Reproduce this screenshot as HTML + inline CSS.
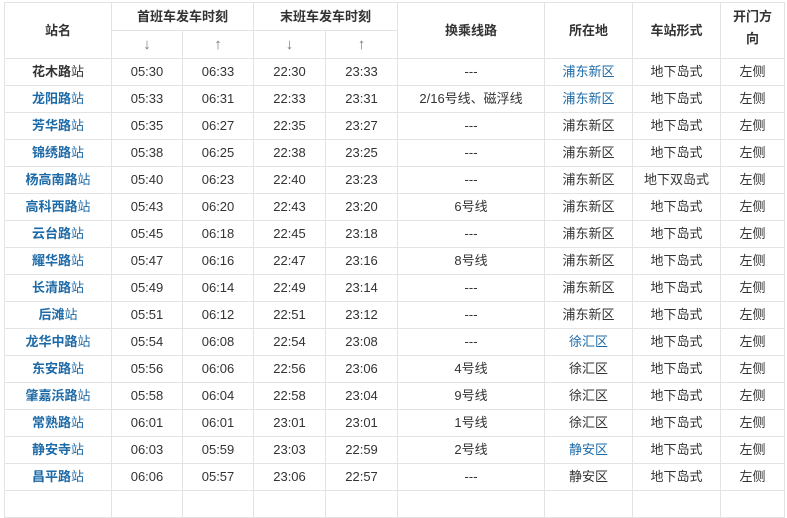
<!DOCTYPE html><html><head><meta charset="utf-8"><style>
body{margin:0;background:#fff;font-family:"Liberation Sans","Noto Sans CJK SC",sans-serif;}
table{position:absolute;left:4px;top:2px;border-collapse:collapse;table-layout:fixed;width:781px;font-size:13px;color:#333;}
td,th{border:1px solid #e3e3e3;text-align:center;padding:0;height:26px;line-height:16px;}
th{font-weight:bold;color:#333;}
tr.h1 th{height:27px}tr.h2 th{height:27px}
.arr{font-weight:normal;color:#777;font-size:15px;}
b{font-weight:bold}
.b{color:#1d6aa8}
</style></head><body>
<table>
<colgroup><col style="width:107px"><col style="width:71px"><col style="width:71px"><col style="width:72px"><col style="width:72px"><col style="width:147px"><col style="width:88px"><col style="width:88px"><col style="width:64px"></colgroup>
<tr class="h1"><th rowspan="2">站名</th><th colspan="2">首班车发车时刻</th><th colspan="2">末班车发车时刻</th><th rowspan="2">换乘线路</th><th rowspan="2">所在地</th><th rowspan="2">车站形式</th><th rowspan="2">开门方<br><span style="line-height:28px">向</span></th></tr>
<tr class="h2"><th class="arr">↓</th><th class="arr">↑</th><th class="arr">↓</th><th class="arr">↑</th></tr>
<tr><td><b>花木路</b>站</td><td>05:30</td><td>06:33</td><td>22:30</td><td>23:33</td><td>---</td><td class="b">浦东新区</td><td>地下岛式</td><td>左侧</td></tr>
<tr><td class="b"><b>龙阳路</b>站</td><td>05:33</td><td>06:31</td><td>22:33</td><td>23:31</td><td>2/16号线、磁浮线</td><td class="b">浦东新区</td><td>地下岛式</td><td>左侧</td></tr>
<tr><td class="b"><b>芳华路</b>站</td><td>05:35</td><td>06:27</td><td>22:35</td><td>23:27</td><td>---</td><td>浦东新区</td><td>地下岛式</td><td>左侧</td></tr>
<tr><td class="b"><b>锦绣路</b>站</td><td>05:38</td><td>06:25</td><td>22:38</td><td>23:25</td><td>---</td><td>浦东新区</td><td>地下岛式</td><td>左侧</td></tr>
<tr><td class="b"><b>杨高南路</b>站</td><td>05:40</td><td>06:23</td><td>22:40</td><td>23:23</td><td>---</td><td>浦东新区</td><td>地下双岛式</td><td>左侧</td></tr>
<tr><td class="b"><b>高科西路</b>站</td><td>05:43</td><td>06:20</td><td>22:43</td><td>23:20</td><td>6号线</td><td>浦东新区</td><td>地下岛式</td><td>左侧</td></tr>
<tr><td class="b"><b>云台路</b>站</td><td>05:45</td><td>06:18</td><td>22:45</td><td>23:18</td><td>---</td><td>浦东新区</td><td>地下岛式</td><td>左侧</td></tr>
<tr><td class="b"><b>耀华路</b>站</td><td>05:47</td><td>06:16</td><td>22:47</td><td>23:16</td><td>8号线</td><td>浦东新区</td><td>地下岛式</td><td>左侧</td></tr>
<tr><td class="b"><b>长清路</b>站</td><td>05:49</td><td>06:14</td><td>22:49</td><td>23:14</td><td>---</td><td>浦东新区</td><td>地下岛式</td><td>左侧</td></tr>
<tr><td class="b"><b>后滩</b>站</td><td>05:51</td><td>06:12</td><td>22:51</td><td>23:12</td><td>---</td><td>浦东新区</td><td>地下岛式</td><td>左侧</td></tr>
<tr><td class="b"><b>龙华中路</b>站</td><td>05:54</td><td>06:08</td><td>22:54</td><td>23:08</td><td>---</td><td class="b">徐汇区</td><td>地下岛式</td><td>左侧</td></tr>
<tr><td class="b"><b>东安路</b>站</td><td>05:56</td><td>06:06</td><td>22:56</td><td>23:06</td><td>4号线</td><td>徐汇区</td><td>地下岛式</td><td>左侧</td></tr>
<tr><td class="b"><b>肇嘉浜路</b>站</td><td>05:58</td><td>06:04</td><td>22:58</td><td>23:04</td><td>9号线</td><td>徐汇区</td><td>地下岛式</td><td>左侧</td></tr>
<tr><td class="b"><b>常熟路</b>站</td><td>06:01</td><td>06:01</td><td>23:01</td><td>23:01</td><td>1号线</td><td>徐汇区</td><td>地下岛式</td><td>左侧</td></tr>
<tr><td class="b"><b>静安寺</b>站</td><td>06:03</td><td>05:59</td><td>23:03</td><td>22:59</td><td>2号线</td><td class="b">静安区</td><td>地下岛式</td><td>左侧</td></tr>
<tr><td class="b"><b>昌平路</b>站</td><td>06:06</td><td>05:57</td><td>23:06</td><td>22:57</td><td>---</td><td>静安区</td><td>地下岛式</td><td>左侧</td></tr>
<tr><td class="b"><b>&nbsp;</b></td><td></td><td></td><td></td><td></td><td></td><td></td><td></td><td></td></tr>
</table>
</body></html>
